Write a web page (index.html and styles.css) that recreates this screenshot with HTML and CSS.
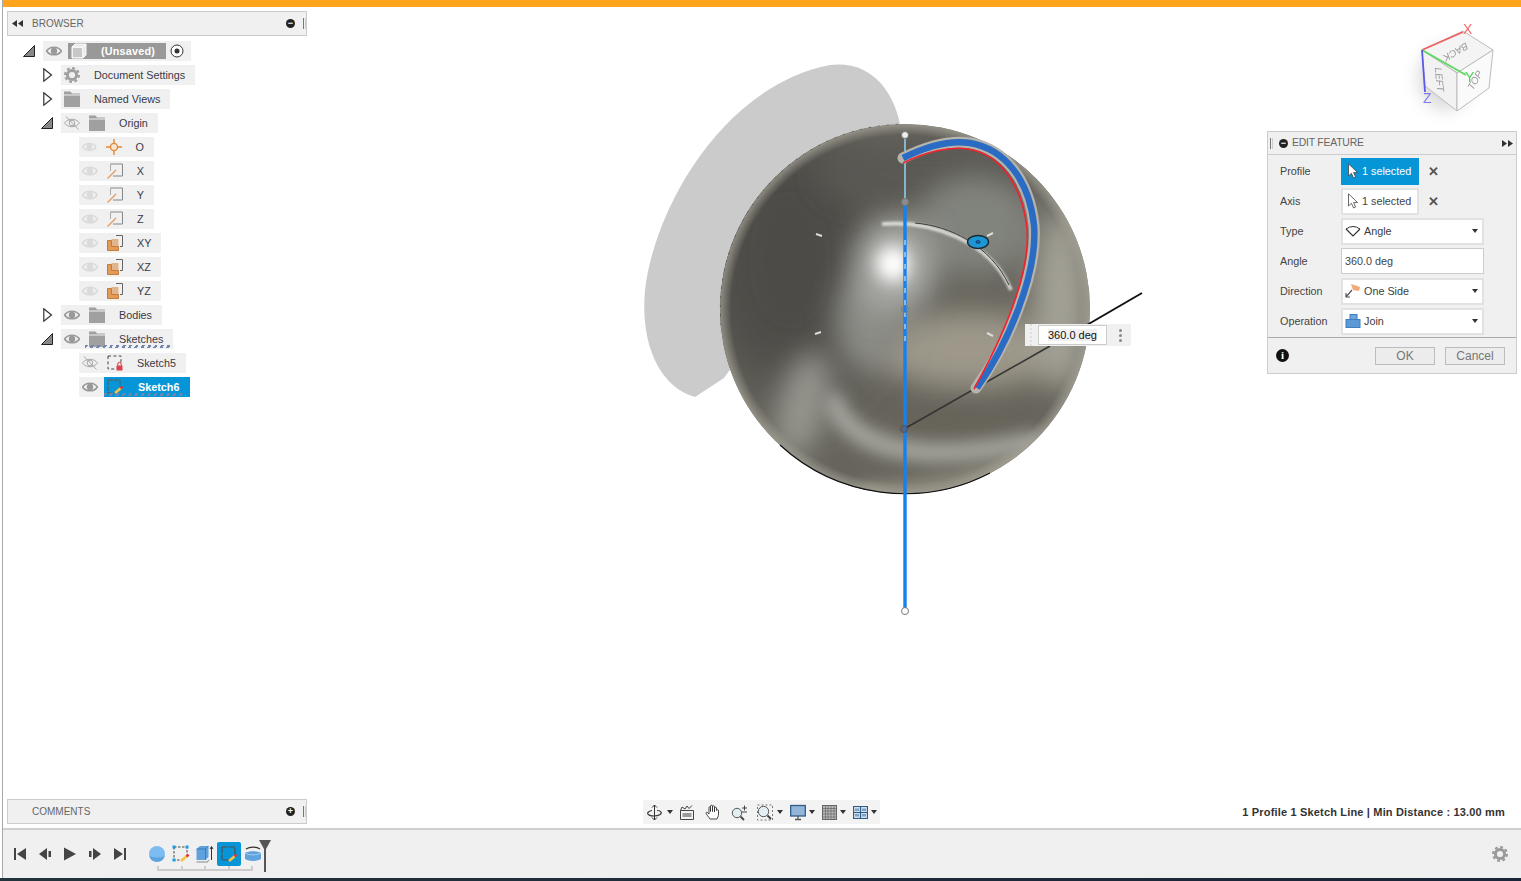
FILE: index.html
```html
<!DOCTYPE html>
<html lang="en">
<head>
    <meta charset="UTF-8">
    <meta name="viewport" content="width=device-width, initial-scale=1.0">
    <title>Edit Feature</title>
    <link rel="stylesheet" href="styles.css">
</head>
<body>
    <!-- shared icons -->
    <svg class="defs" width="0" height="0">
        <defs>
            <symbol id="eye" viewBox="0 0 16 16">
                <path d="M0.5 8C4 3 12 3 15.5 8C12 13 4 13 0.5 8Z" fill="none" stroke="currentColor" stroke-width="1.6"/>
                <circle cx="8" cy="8" r="3.2" fill="currentColor"/>
            </symbol>
            <symbol id="eye-off" viewBox="0 0 16 16">
                <path d="M0.5 8C4 3 12 3 15.5 8C12 13 4 13 0.5 8Z" fill="none" stroke="currentColor" stroke-width="1"/>
                <circle cx="8" cy="8" r="2.8" fill="none" stroke="currentColor"/>
                <path d="M2 1.5L14.5 14.5" stroke="currentColor"/>
            </symbol>
            <symbol id="folder" viewBox="0 0 16 16">
                <path d="M0 0.5H6.5L8 2.5H16V3.5H0Z M0 4.5H16V16H0Z" fill="#a0a0a0"/>
            </symbol>
            <symbol id="gear" viewBox="0 0 16 16">
                <circle cx="8" cy="8" r="4.6" fill="none" stroke="currentColor" stroke-width="3"/>
                <circle cx="8" cy="8" r="6.9" fill="none" stroke="currentColor" stroke-width="2.2" stroke-dasharray="2.9 2.5"/>
            </symbol>
            <symbol id="tri-open" viewBox="0 0 12 12">
                <path d="M11.5 0.5V11.5H0.5Z" fill="#888" stroke="#222"/>
            </symbol>
            <symbol id="tri-closed" viewBox="0 0 10 14">
                <path d="M0.8 0.8L8.5 7L0.8 13.2Z" fill="#fff" stroke="#333" stroke-width="1.2"/>
            </symbol>
            <symbol id="axis" viewBox="0 0 16 16">
                <path d="M3.5 1H15.5V13H6" fill="none" stroke="#888"/>
                <path d="M3.5 1V8" stroke="#aaa"/>
                <path d="M0.5 15.5L9 7" stroke="#e49a5c" stroke-width="1.2"/>
            </symbol>
            <symbol id="plane" viewBox="0 0 16 16">
                <path d="M9 0.5H15.5V11.5H13" fill="none" stroke="#666"/>
                <rect x="4.5" y="4" width="7" height="7" fill="#e2b48a"/>
                <path d="M0.5 5.5H4.5V11.5H11.5V15.5H0.5Z" fill="#e09a5a" stroke="#c97a35"/>
            </symbol>
            <symbol id="pointer" viewBox="0 0 12 16">
                <path d="M1.5 0.8V13L4.4 10.3L6.6 15L8.6 14L6.6 9.6H10.6Z" fill="currentColor" stroke="#444" stroke-width="0.8"/>
            </symbol>
            <symbol id="caret" viewBox="0 0 6 4">
                <path d="M0 0H6L3 4Z" fill="#333"/>
            </symbol>
            <symbol id="double-left" viewBox="0 0 11 7">
                <path d="M0 3.5L5 0V7Z M6 3.5L11 0V7Z" fill="#333"/>
            </symbol>
            <symbol id="double-right" viewBox="0 0 11 7">
                <path d="M5 3.5L0 0V7Z M11 3.5L6 0V7Z" fill="#333"/>
            </symbol>
        </defs>
    </svg>

    <div class="app">
        <div class="topbar"></div>

        <div class="workspace">
            <!-- model area, drawn in page coordinates -->
            <svg class="scene" viewBox="3 7 1518 821" width="1518" height="821">
                <defs>
                    <clipPath id="ballClip"><circle cx="905" cy="309" r="185"/></clipPath>
                    <filter id="b30" x="-60%" y="-60%" width="220%" height="220%"><feGaussianBlur stdDeviation="30"/></filter>
                    <filter id="b14" x="-60%" y="-60%" width="220%" height="220%"><feGaussianBlur stdDeviation="14"/></filter>
                    <filter id="b8" x="-60%" y="-60%" width="220%" height="220%"><feGaussianBlur stdDeviation="8"/></filter>
                    <filter id="b1" x="-30%" y="-30%" width="160%" height="160%"><feGaussianBlur stdDeviation="0.7"/></filter>
                    <filter id="b2" x="-30%" y="-30%" width="160%" height="160%"><feGaussianBlur stdDeviation="1.2"/></filter>
                    <radialGradient id="rim" cx="905" cy="309" r="185" gradientUnits="userSpaceOnUse">
                        <stop offset="0.94" stop-color="#a8a69a" stop-opacity="0"/>
                        <stop offset="1" stop-color="#a8a69a" stop-opacity="0.7"/>
                    </radialGradient>
                </defs>

                <path class="shadow" d="M724 378L695 397C660 387 640 345 645 290C655 205 725 85 830 65C870 60 895 90 901 130Z"/>

                <g clip-path="url(#ballClip)">
                    <rect x="715" y="120" width="380" height="380" fill="#66645c"/>
                    <ellipse cx="790" cy="260" rx="95" ry="130" fill="#4d4c47" filter="url(#b30)"/>
                    <ellipse cx="930" cy="175" rx="110" ry="35" fill="#5a5953" filter="url(#b14)"/>
                    <ellipse cx="975" cy="225" rx="60" ry="50" fill="#81837d" filter="url(#b14)"/>
                    <ellipse cx="970" cy="350" rx="95" ry="38" fill="#9d988a" filter="url(#b14)"/>
                    <ellipse cx="1060" cy="300" rx="28" ry="90" fill="#a3a196" filter="url(#b14)"/>
                    <ellipse cx="945" cy="425" rx="75" ry="14" fill="#67645a" filter="url(#b8)"/>
                    <path d="M830 395C850 455 930 465 1040 440" fill="none" stroke="#a5a59e" stroke-width="20" filter="url(#b8)"/>
                    <path d="M860 490C920 490 990 480 1050 445" fill="none" stroke="#9b9788" stroke-width="12" filter="url(#b8)"/>
                    <ellipse cx="803" cy="405" rx="24" ry="55" fill="#95958e" filter="url(#b14)" transform="rotate(15 803 405)"/>
                    <ellipse cx="870" cy="320" rx="35" ry="50" fill="#8b8c86" filter="url(#b14)"/>
                    <ellipse cx="895" cy="265" rx="42" ry="48" fill="#a9aaa6" filter="url(#b14)"/>
                    <ellipse cx="893" cy="264" rx="17" ry="18" fill="#fff" filter="url(#b8)"/>
                    <circle cx="905" cy="309" r="185" fill="url(#rim)"/>
                </g>
                <path d="M780 445A185 185 0 0 0 990 473" fill="none" stroke="#111" stroke-width="1.2"/>
                <path d="M721 325A185 185 0 0 1 900 124" fill="none" stroke="#222" stroke-width="0.8" stroke-dasharray="2 7" opacity="0.5"/>

                <!-- small highlights on the ball -->
                <path class="tick" d="M816 234L822 236M815 334L821 332M987 333L993 336M987 236L993 233"/>

                <!-- inner arc and handle -->
                <path d="M882 224C930 220 990 240 1011 290" fill="none" stroke="#f2f2f0" stroke-width="4" opacity="0.75" filter="url(#b2)"/>
                <path d="M915 223C950 226 990 245 1009 285" fill="none" stroke="#3d3d3a" stroke-width="1"/>
                <ellipse cx="978" cy="242" rx="10.5" ry="6.5" fill="#1e96d4" stroke="#1c2b33" stroke-width="1.4"/>
                <ellipse cx="978" cy="242" rx="2" ry="1.2" fill="none" stroke="#125"/>

                <!-- revolve axis -->
                <path d="M904 429L1050 346" stroke="#333" stroke-width="1.5"/>
                <path d="M1080 329L1142 293" stroke="#111" stroke-width="2"/>
                <path d="M905 135V203" stroke="#8fcdea" stroke-width="1.6"/>
                <path d="M905 203V611" stroke="#1580f0" stroke-width="3.4"/>
                <path d="M905 240V345" stroke="#cfe0ee" stroke-width="1.2" stroke-dasharray="5 7"/>

                <!-- profile -->
                <path d="M903 158C925 147 950 140 970 143C1005 149 1029 180 1034 225C1038 275 1007 345 976 388" fill="none" stroke="#b5b3ac" stroke-width="11" stroke-linecap="round"/>
                <path d="M903 158C925 147 950 140 970 143C1005 149 1029 180 1034 225C1038 275 1007 345 977 388" fill="none" stroke="#2a6bc4" stroke-width="6.5"/>
                <path d="M903 163C925 152 950 146 968 149C1000 154 1022 185 1027 228C1031 275 1000 342 974 389" fill="none" stroke="#f4212e" stroke-width="1.6"/>

                <circle cx="905" cy="135" r="3.5" fill="#eee" stroke="#777"/>
                <circle cx="905" cy="202" r="3.5" fill="#8a8d8c" stroke="#777"/>
                <circle cx="905" cy="309" r="3.5" fill="none" stroke="#77807f"/>
                <circle cx="904" cy="429" r="3.5" fill="#5b5a70" fill-opacity="0.5" stroke="#555"/>
                <circle cx="905" cy="611" r="3.5" fill="#fff" stroke="#777"/>

                <!-- view cube -->
                <ellipse cx="1445" cy="78" rx="27" ry="32" fill="#ccc" filter="url(#b8)" opacity="0.7"/>
                <g filter="url(#b1)">
                    <path d="M1422 50L1463 31L1493 50L1457 73Z" fill="#f4f4f4" stroke="#bbb"/>
                    <path d="M1422 50L1457 73V111L1425 86Z" fill="#f2f2f2" stroke="#bbb"/>
                    <path d="M1457 73L1493 50L1489 88L1457 111Z" fill="#fafafa" stroke="#bbb"/>
                    <path d="M1422 50L1463 32" stroke="#ef6060" stroke-width="1.8"/>
                    <path d="M1422 50L1466 75" stroke="#5fd65f" stroke-width="1.8"/>
                    <path d="M1422 50L1425 92" stroke="#5a5ae6" stroke-width="1.8"/>
                    <text class="axis-label axis-x" x="1463" y="34">X</text>
                    <text class="axis-label axis-y" x="1465" y="82">Y</text>
                    <text class="axis-label axis-z" x="1423" y="103">Z</text>
                    <text class="cube-label" transform="translate(1454 49) rotate(150)">BACK</text>
                    <text class="cube-label" transform="translate(1436 80) rotate(84)">LEFT</text>
                    <text class="cube-label" transform="translate(1478 82) rotate(-60)">TOP</text>
                </g>
            </svg>

            <!-- browser -->
            <div class="side">
                <div class="panel-head">
                    <svg class="collapse"><use href="#double-left"/></svg>
                    <span class="head-title">BROWSER</span>
                    <span class="round-btn">−</span>
                    <span class="grip"></span>
                </div>
                <div class="tree">
                    <div class="row lvl0">
                        <svg class="tri-open"><use href="#tri-open"/></svg>
                        <div class="pill">
                            <svg class="eye"><use href="#eye"/></svg>
                            <span class="doc-name">
                                <svg class="cube" viewBox="0 0 16 16" width="16" height="16">
                                    <path d="M1 4L4 1H15V12L12 15H1Z" fill="#e6e6e6" stroke="#fff"/>
                                    <path d="M12 15V4H1M12 4L15 1" fill="none" stroke="#fff"/>
                                    <path d="M2 5H11V14H2Z" fill="#c8c8c8"/>
                                </svg>
                                <b>(Unsaved)</b>
                            </span>
                            <svg class="radio" viewBox="0 0 14 14" width="14" height="14">
                                <circle cx="7" cy="7" r="6" fill="#fff" stroke="#333"/>
                                <circle cx="7" cy="7" r="2.5" fill="#333"/>
                            </svg>
                        </div>
                    </div>
                    <div class="row lvl1">
                        <svg class="tri-closed"><use href="#tri-closed"/></svg>
                        <div class="pill">
                            <svg class="icon gear"><use href="#gear"/></svg>
                            <span class="label">Document Settings</span>
                        </div>
                    </div>
                    <div class="row lvl1">
                        <svg class="tri-closed"><use href="#tri-closed"/></svg>
                        <div class="pill">
                            <svg class="icon"><use href="#folder"/></svg>
                            <span class="label">Named Views</span>
                        </div>
                    </div>
                    <div class="row lvl1">
                        <svg class="tri-open"><use href="#tri-open"/></svg>
                        <div class="pill">
                            <svg class="eye off"><use href="#eye-off"/></svg>
                            <svg class="icon"><use href="#folder"/></svg>
                            <span class="label">Origin</span>
                        </div>
                    </div>
                    <div class="row lvl2">
                        <div class="pill wide">
                            <svg class="eye faint"><use href="#eye"/></svg>
                            <svg class="icon" viewBox="0 0 16 16">
                                <path d="M8 0V16M0 8H16" stroke="#e0883c" stroke-width="1.4"/>
                                <circle cx="8" cy="8" r="3.6" fill="#fbe3cc" stroke="#e0883c" stroke-width="1.4"/>
                            </svg>
                            <span class="label">O</span>
                        </div>
                    </div>
                    <div class="row lvl2">
                        <div class="pill wide">
                            <svg class="eye faint"><use href="#eye"/></svg>
                            <svg class="icon"><use href="#axis"/></svg>
                            <span class="label">X</span>
                        </div>
                    </div>
                    <div class="row lvl2">
                        <div class="pill wide">
                            <svg class="eye faint"><use href="#eye"/></svg>
                            <svg class="icon"><use href="#axis"/></svg>
                            <span class="label">Y</span>
                        </div>
                    </div>
                    <div class="row lvl2">
                        <div class="pill wide">
                            <svg class="eye faint"><use href="#eye"/></svg>
                            <svg class="icon"><use href="#axis"/></svg>
                            <span class="label">Z</span>
                        </div>
                    </div>
                    <div class="row lvl2">
                        <div class="pill">
                            <svg class="eye faint"><use href="#eye"/></svg>
                            <svg class="icon"><use href="#plane"/></svg>
                            <span class="label">XY</span>
                        </div>
                    </div>
                    <div class="row lvl2">
                        <div class="pill">
                            <svg class="eye faint"><use href="#eye"/></svg>
                            <svg class="icon"><use href="#plane"/></svg>
                            <span class="label">XZ</span>
                        </div>
                    </div>
                    <div class="row lvl2">
                        <div class="pill">
                            <svg class="eye faint"><use href="#eye"/></svg>
                            <svg class="icon"><use href="#plane"/></svg>
                            <span class="label">YZ</span>
                        </div>
                    </div>
                    <div class="row lvl1">
                        <svg class="tri-closed"><use href="#tri-closed"/></svg>
                        <div class="pill">
                            <svg class="eye"><use href="#eye"/></svg>
                            <svg class="icon"><use href="#folder"/></svg>
                            <span class="label">Bodies</span>
                        </div>
                    </div>
                    <div class="row lvl1">
                        <svg class="tri-open"><use href="#tri-open"/></svg>
                        <div class="pill">
                            <svg class="eye"><use href="#eye"/></svg>
                            <svg class="icon"><use href="#folder"/></svg>
                            <span class="label">Sketches</span>
                            <span class="hatch hatch-sketches"></span>
                        </div>
                    </div>
                    <div class="row lvl2">
                        <div class="pill">
                            <svg class="eye off"><use href="#eye-off"/></svg>
                            <svg class="icon" viewBox="0 0 16 16">
                                <path d="M1 1H14V8M1 1V14H8" fill="none" stroke="#444" stroke-dasharray="3 2.4"/>
                                <rect x="9.5" y="10.5" width="6" height="5" fill="#d9434e"/>
                                <path d="M10.8 10.5V9A1.7 1.7 0 0 1 14.2 9V10.5" fill="none" stroke="#c33"/>
                            </svg>
                            <span class="label">Sketch5</span>
                        </div>
                    </div>
                    <div class="row lvl2">
                        <div class="pill selected-pill">
                            <svg class="eye"><use href="#eye"/></svg>
                            <span class="sel-name">
                                <svg class="icon" viewBox="0 0 16 16">
                                    <path d="M1 1H13V8M1 1V14H8" fill="none" stroke="#5a5a5a" stroke-dasharray="5 1"/>
                                    <path d="M8 14L14 9" stroke="#f5c542" stroke-width="2.6"/>
                                    <path d="M13.5 9.5L15.5 7.5" stroke="#e0343f" stroke-width="2.6"/>
                                </svg>
                                <b>Sketch6</b>
                                <span class="hatch hatch-sel"></span>
                            </span>
                        </div>
                    </div>
                </div>
            </div>

            <!-- comments -->
            <div class="panel-head comments">
                <span class="collapse"></span>
                <span class="head-title">COMMENTS</span>
                <span class="round-btn">+</span>
                <span class="grip"></span>
            </div>

            <!-- value box next to the model -->
            <div class="dim-box">
                <span class="dim-grip"></span>
                <span class="dim-value"><span>360.0 deg</span></span>
                <span class="dim-menu"><i></i><i></i><i></i></span>
            </div>

            <!-- edit feature dialog -->
            <div class="dialog">
                <div class="dialog-head">
                    <span class="grip"></span>
                    <span class="round-btn">−</span>
                    <span class="head-title">EDIT FEATURE</span>
                    <svg class="collapse"><use href="#double-right"/></svg>
                </div>
                <div class="dialog-body">
                    <label>Profile</label>
                    <div class="field-line">
                        <div class="pick active">
                            <svg class="pointer"><use href="#pointer"/></svg>1 selected
                        </div>
                        <span class="clear">✕</span>
                    </div>
                    <label>Axis</label>
                    <div class="field-line">
                        <div class="pick">
                            <svg class="pointer"><use href="#pointer"/></svg>1 selected
                        </div>
                        <span class="clear">✕</span>
                    </div>
                    <label>Type</label>
                    <div class="select">
                        <svg class="opt-icon" viewBox="0 0 16 16">
                            <path d="M1 6L8 13L15 6" fill="none" stroke="#333" stroke-width="1.2"/>
                            <path d="M1 6Q8 1 15 6" fill="none" stroke="#333"/>
                        </svg>
                        <span>Angle</span>
                        <svg class="caret"><use href="#caret"/></svg>
                    </div>
                    <label>Angle</label>
                    <div class="text-input">360.0 deg</div>
                    <label>Direction</label>
                    <div class="select">
                        <svg class="opt-icon" viewBox="0 0 16 16">
                            <path d="M6 1L15 4L14 8L8 7Z" fill="#f2a877"/>
                            <path d="M7 7L1 14M1 10V14H5" fill="none" stroke="#555" stroke-width="1.2"/>
                        </svg>
                        <span>One Side</span>
                        <svg class="caret"><use href="#caret"/></svg>
                    </div>
                    <label>Operation</label>
                    <div class="select">
                        <svg class="opt-icon" viewBox="0 0 16 16">
                            <rect x="5" y="1.5" width="7" height="7" fill="#6fa5d8" stroke="#3f7fbd"/>
                            <rect x="1" y="6.5" width="14" height="8" fill="#5c9ad6" stroke="#3f7fbd"/>
                        </svg>
                        <span>Join</span>
                        <svg class="caret"><use href="#caret"/></svg>
                    </div>
                </div>
                <div class="dialog-foot">
                    <span class="info">i</span>
                    <button class="btn">OK</button>
                    <button class="btn">Cancel</button>
                </div>
            </div>

            <!-- navigation toolbar -->
            <div class="navbar">
                <div class="tool">
                    <svg width="17" height="17" viewBox="0 0 17 17">
                        <path d="M8.5 1V16M6 3.5L8.5 1L11 3.5M6 13.5L8.5 16L11 13.5" fill="none" stroke="#333"/>
                        <path d="M6 6.5C-1 8 1 12 8 12C13 12 16 10 15 8C14.5 7 13 6.5 11 6.5" fill="none" stroke="#333" stroke-width="1.2"/>
                    </svg>
                    <svg class="caret"><use href="#caret"/></svg>
                </div>
                <div class="tool solo">
                    <svg width="16" height="17" viewBox="0 0 16 17">
                        <path d="M1.5 6.5H14.5V15.5H1.5Z" fill="#f4f4f4" stroke="#444"/>
                        <rect x="3.5" y="9" width="9" height="4" fill="#9a9a9a"/>
                        <path d="M1.5 6.5L3 3L6 5L8 2L10 4.5L13 1.5" fill="none" stroke="#444"/>
                    </svg>
                </div>
                <div class="tool solo">
                    <svg width="16" height="17" viewBox="0 0 16 17">
                        <path d="M5 15C3 12 1 10 1 9C1 8 2.5 8 4 10V3.5C4 2.5 5.5 2.5 5.5 3.5V7.5V2C5.5 1 7.5 1 7.5 2V7.5V2.5C7.5 1.5 9.5 1.5 9.5 2.5V8V4C9.5 3 11.5 3 11.5 4V6.5C12 5.5 13.5 5.5 13.5 6.5V10C13.5 12 12.5 14 12 15Z" fill="#fff" stroke="#333" stroke-width="0.9"/>
                    </svg>
                </div>
                <div class="tool solo">
                    <svg width="16" height="17" viewBox="0 0 16 17">
                        <circle cx="6" cy="9" r="4.7" fill="#e3eef3" stroke="#555"/>
                        <path d="M9.5 12.5L13 16" stroke="#444" stroke-width="1.8"/>
                        <path d="M11 4H16M13.5 1.5V6.5M11 8H16" fill="none" stroke="#444"/>
                    </svg>
                </div>
                <div class="tool">
                    <svg width="16" height="17" viewBox="0 0 16 17">
                        <rect x="0.5" y="1" width="15" height="15" fill="none" stroke="#777" stroke-dasharray="2 2"/>
                        <circle cx="6.5" cy="7.5" r="5.2" fill="#e3eef3" stroke="#555"/>
                        <path d="M10.5 11.5L14 15" stroke="#444" stroke-width="2"/>
                    </svg>
                    <svg class="caret"><use href="#caret"/></svg>
                </div>
                <div class="tool tight">
                    <svg width="16" height="17" viewBox="0 0 16 17">
                        <rect x="0.7" y="1.5" width="14.6" height="10.5" fill="#93b6d8" stroke="#2f5d87" stroke-width="1.3"/>
                        <path d="M5 15.5H11M8 12V15.5" stroke="#555" stroke-width="1.3"/>
                    </svg>
                    <svg class="caret"><use href="#caret"/></svg>
                </div>
                <div class="tool tight">
                    <svg width="15" height="17" viewBox="0 0 15 17">
                        <rect x="0.5" y="1.5" width="14" height="14" fill="#bbb" stroke="#666"/>
                        <path d="M3.5 1.5V15.5M6 1.5V15.5M9 1.5V15.5M12 1.5V15.5M0.5 4.5H14.5M0.5 7H14.5M0.5 10H14.5M0.5 13H14.5" stroke="#666" stroke-width="0.7"/>
                    </svg>
                    <svg class="caret"><use href="#caret"/></svg>
                </div>
                <div class="tool tight">
                    <svg width="15" height="17" viewBox="0 0 15 17">
                        <path d="M0.5 2.5H14.5V14.5H0.5Z M7.5 2.5V14.5M0.5 8.5H14.5" fill="#d3e1ee" stroke="#2f5d87" stroke-width="1.2"/>
                        <rect x="2" y="4.5" width="4" height="2.5" fill="#7da3c7"/>
                        <rect x="9" y="4.5" width="4" height="2.5" fill="#7da3c7"/>
                        <rect x="2" y="10" width="4" height="2.5" fill="#7da3c7"/>
                        <rect x="9" y="10" width="4" height="2.5" fill="#7da3c7"/>
                    </svg>
                    <svg class="caret"><use href="#caret"/></svg>
                </div>
            </div>

            <div class="status">1 Profile 1 Sketch Line | Min Distance : 13.00 mm</div>
        </div>

        <!-- timeline -->
        <div class="timeline">
            <div class="player">
                <svg viewBox="0 0 14 14"><path d="M1 1H3V13H1ZM13 1V13L4 7Z" fill="#444"/></svg>
                <svg viewBox="0 0 14 14"><path d="M9 1V13L1 7ZM10.5 4H13V10H10.5Z" fill="#444"/></svg>
                <svg viewBox="0 0 14 14"><path d="M1 0.5V13.5L13 7Z" fill="#444"/></svg>
                <svg viewBox="0 0 14 14"><path d="M5 1V13L13 7ZM1 4H3.5V10H1Z" fill="#444"/></svg>
                <svg viewBox="0 0 14 14"><path d="M1 1V13L10 7ZM11 1H13V13H11Z" fill="#444"/></svg>
            </div>
            <div class="features">
                <div class="feature">
                    <svg viewBox="0 0 18 18" width="18" height="18">
                        <circle cx="9" cy="9" r="8" fill="#7dbcf2"/>
                        <path d="M1.2 10.5C4 13 14 13 16.8 10.5A8 8 0 0 1 1.2 10.5Z" fill="#5fa2dd"/>
                    </svg>
                </div>
                <div class="feature">
                    <svg viewBox="0 0 18 18" width="18" height="18">
                        <path d="M2 2H15V9M2 2V15H9" fill="none" stroke="#444" stroke-dasharray="2.5 1.5"/>
                        <rect x="0.5" y="0.5" width="3" height="3" fill="#1f9ce0"/>
                        <rect x="13.5" y="0.5" width="3" height="3" fill="#1f9ce0"/>
                        <rect x="0.5" y="13.5" width="3" height="3" fill="#1f9ce0"/>
                        <path d="M9 16L15 11" stroke="#f5c542" stroke-width="2.6"/>
                        <path d="M14.5 11.5L16.5 9.5" stroke="#e0343f" stroke-width="2.6"/>
                    </svg>
                </div>
                <div class="feature">
                    <svg viewBox="0 0 18 18" width="18" height="18">
                        <path d="M0.5 4L4 1H12.5V12L9.5 15H0.5Z" fill="#5fa2dd"/>
                        <path d="M9.5 15V4H0.5M9.5 4L12.5 1" fill="none" stroke="#2f6ea8" stroke-width="0.7"/>
                        <path d="M0.5 17H11L13 15" fill="none" stroke="#aaa" stroke-width="1.4"/>
                        <path d="M15.5 15V2M14 4L15.5 1.5L17 4" fill="none" stroke="#333"/>
                    </svg>
                </div>
                <div class="feature active">
                    <svg viewBox="0 0 18 18" width="18" height="18">
                        <path d="M2 2H15V9M2 2V15H9" fill="none" stroke="#5a4a44" stroke-width="1.2" stroke-dasharray="6 1"/>
                        <path d="M9 16L15 11" stroke="#f5c542" stroke-width="2.6"/>
                        <path d="M14.5 11.5L16.5 9.5" stroke="#e0343f" stroke-width="2.6"/>
                    </svg>
                </div>
                <div class="feature">
                    <svg viewBox="0 0 18 18" width="18" height="18">
                        <path d="M1 8C5 5.5 13 5.5 17 8V14C13 16.5 5 16.5 1 14Z" fill="#5fa2dd"/>
                        <path d="M1 8C5 10.5 13 10.5 17 8" fill="none" stroke="#a8d0ef"/>
                        <path d="M2 4C6 1.5 12 1.5 16 4" fill="none" stroke="#333" stroke-width="1.2"/>
                    </svg>
                </div>
                <div class="bracket"><i></i><i></i><i></i><i></i><i></i></div>
                <svg class="marker" viewBox="0 0 12 32" width="12" height="32">
                    <path d="M0 0H12L7 9V32H5V9Z" fill="#555"/>
                </svg>
            </div>
            <svg class="tl-gear"><use href="#gear"/></svg>
        </div>
    </div>
    <div class="strip"></div>
</body>
</html>
```

FILE: styles.css
```css
* {
    box-sizing: border-box;
}

html, body {
    height: 100%;
    margin: 0;
}

body {
    font-family: "Liberation Sans", Arial, sans-serif;
    font-size: 11px;
    color: #3c3c3c;
    background-color: white;
    display: flex;
    flex-direction: column;
    overflow: hidden;
}

.defs {
    position: absolute;
}

.app {
    flex: 1;
    min-height: 0;
    margin-left: 2px;
    border-left: 1px solid #a8a8a8;
    display: flex;
    flex-direction: column;
}

.topbar {
    height: 7px;
    background-color: #ffa41c;
}

.workspace {
    flex: 1;
    min-height: 0;
    position: relative;
}

.scene {
    position: absolute;
    left: 0;
    top: 0;
}

.shadow {
    fill: #cbcbcb;
}

.tick {
    stroke: #dcdcd8;
    stroke-width: 2;
    fill: none;
}

.axis-label {
    font-size: 14px;
}

.axis-x { fill: #ef6a6a; }
.axis-y { fill: #4fd04f; }
.axis-z { fill: #7d7df0; }

.cube-label {
    font-size: 10px;
    font-style: italic;
    fill: #999;
    text-anchor: middle;
}

/* browser */
.side {
    position: absolute;
    left: 4px;
    top: 4px;
    width: 300px;
}

.panel-head {
    height: 25px;
    width: 300px;
    background-color: #f0f0f0;
    border: 1px solid #cccccc;
    display: flex;
    align-items: center;
    padding-left: 4px;
}

.collapse {
    width: 11px;
    height: 7px;
    margin-right: 9px;
    flex-shrink: 0;
}

.head-title {
    flex: 1;
    color: #666;
    font-size: 10px;
    margin-top: -1px;
}

.round-btn {
    width: 9px;
    height: 9px;
    border-radius: 50%;
    background-color: #222;
    color: white;
    font-size: 9px;
    font-weight: bold;
    line-height: 9px;
    text-align: center;
    flex-shrink: 0;
}

.grip {
    width: 3px;
    height: 11px;
    border-left: 1px solid #777;
    border-right: 1px solid #ccc;
    margin: 0 0 0 8px;
}

.comments {
    position: absolute;
    left: 4px;
    top: 792px;
}

.tree {
    padding-top: 5px;
    display: flex;
    flex-direction: column;
    gap: 4px;
}

.row {
    height: 20px;
    display: flex;
    align-items: center;
}

.lvl0 { padding-left: 18px; }
.lvl1 { padding-left: 36px; }
.lvl2 { padding-left: 72px; }

.tri-open {
    width: 12px;
    height: 12px;
    margin-left: -2px;
    margin-right: 8px;
}

.tri-closed {
    width: 10px;
    height: 14px;
    margin-right: 8px;
}

.pill {
    height: 20px;
    background-color: #f0f0f0;
    display: flex;
    align-items: center;
    padding: 0 10px 0 3px;
    position: relative;
    font-size: 10.8px;
    color: #3a3a48;
}

.pill.wide {
    width: 75px;
}

.eye {
    width: 16px;
    height: 16px;
    color: #999999;
    margin-right: 9px;
}

.eye.off {
    color: #a8a8a8;
}

.eye.faint {
    color: #dadada;
}

.icon {
    width: 16px;
    height: 16px;
    flex-shrink: 0;
}

.gear {
    color: #a0a0a0;
}

.icon + .label {
    margin-left: 14px;
}

.doc-name {
    margin-left: -3px;
    width: 98px;
    height: 16px;
    background-color: #999999;
    display: flex;
    align-items: center;
    padding-left: 3px;
    color: white;
}

.doc-name b {
    margin-left: 14px;
    letter-spacing: 0.2px;
}

.cube {
    flex-shrink: 0;
}

.radio {
    margin-left: 4px;
    margin-right: -3px;
}

.selected-pill {
    padding-right: 0;
}

.selected-pill .eye {
    margin-right: 6px;
}

.sel-name {
    height: 20px;
    width: 86px;
    background-color: #0696d7;
    color: white;
    display: flex;
    align-items: center;
    padding-left: 3px;
    position: relative;
}

.sel-name b {
    margin-left: 15px;
}

.hatch {
    position: absolute;
    bottom: 1px;
    height: 3px;
    background-image: repeating-linear-gradient(120deg, #7485ad 0, #7485ad 2.5px, transparent 2.5px, transparent 5.5px);
}

.hatch-sketches {
    left: 24px;
    right: 2px;
}

.hatch-sel {
    left: 0;
    right: 4px;
}

/* value box */
.dim-box {
    position: absolute;
    left: 1022px;
    top: 317px;
    width: 106px;
    height: 22px;
    background-color: #f0f0f0;
    display: flex;
    align-items: center;
}

.dim-grip {
    width: 13px;
    height: 22px;
    border-left: 2px dotted #ddd;
    margin-left: 5px;
    flex-shrink: 0;
    margin-right: -5px;
}

.dim-value {
    width: 69px;
    height: 20px;
    background-color: white;
    border: 1px solid #cccccc;
    padding-left: 9px;
    font-size: 11px;
    line-height: 18px;
    color: #111;
}

.dim-value span {
    background-color: #f0f0f0;
}

.dim-menu {
    display: flex;
    flex-direction: column;
    gap: 2px;
    margin-left: 12px;
}

.dim-menu i {
    width: 3px;
    height: 3px;
    border-radius: 50%;
    background-color: #888;
}

/* dialog */
.dialog {
    position: absolute;
    left: 1264px;
    top: 124px;
    width: 250px;
    height: 243px;
    background-color: #f0f0f0;
    border: 1px solid #cccccc;
    display: flex;
    flex-direction: column;
}

.dialog-head {
    height: 23px;
    display: flex;
    align-items: center;
    border-bottom: 1px solid #cccccc;
    padding: 0 0 0 2px;
}

.dialog-head .grip {
    margin: 0 6px 0 0;
}

.dialog-head .head-title {
    margin-left: 4px;
    font-size: 10.4px;
    letter-spacing: -0.2px;
    margin-top: -1px;
}

.dialog-head .collapse {
    margin-right: 3px;
}

.dialog-body {
    flex: 1;
    display: grid;
    grid-template-columns: 49px 143px;
    grid-auto-rows: 30px;
    column-gap: 12px;
    align-items: center;
    padding: 0 0 0 12px;
    margin-top: 1px;
    font-size: 10.8px;
}

.dialog-body label {
    color: #444;
}

.field-line {
    display: flex;
    align-items: center;
}

.pick {
    width: 78px;
    height: 27px;
    background-color: white;
    border: 2px solid #e2e2e2;
    display: flex;
    align-items: center;
    padding-left: 4px;
    color: #444;
}

.pick.active {
    background-color: #0696d7;
    border-color: #0696d7;
    color: white;
}

.pointer {
    width: 12px;
    height: 16px;
    color: white;
    margin-right: 3px;
    flex-shrink: 0;
}

.clear {
    margin-left: 9px;
    color: #555;
    font-size: 13px;
    font-weight: bold;
}

.select {
    height: 27px;
    background-color: white;
    border: 2px solid #e2e2e2;
    display: flex;
    align-items: center;
    padding: 0 4px 0 2px;
}

.select > span {
    flex: 1;
    margin-left: 3px;
}

.opt-icon {
    width: 16px;
    height: 16px;
    flex-shrink: 0;
}

.caret {
    width: 6px;
    height: 4px;
    flex-shrink: 0;
}

.text-input {
    height: 26px;
    background-color: white;
    border: 1px solid #cccccc;
    padding-left: 3px;
    line-height: 24px;
    color: #444;
}

.dialog-foot {
    height: 36px;
    border-top: 1px solid #aaaaaa;
    display: flex;
    align-items: center;
    padding: 0 11px 0 8px;
    gap: 10px;
}

.info {
    width: 13px;
    height: 13px;
    border-radius: 50%;
    background-color: #111;
    color: white;
    font-family: "Liberation Serif", serif;
    font-weight: bold;
    font-size: 11px;
    line-height: 13px;
    text-align: center;
    margin-right: auto;
}

.btn {
    width: 60px;
    height: 18px;
    padding: 0;
    background-color: #ececec;
    border: 1px solid #bdbdbd;
    font-family: inherit;
    font-size: 12px;
    color: #777;
}

/* navigation toolbar */
.navbar {
    position: absolute;
    left: 640px;
    top: 793px;
    width: 237px;
    height: 24px;
    background-color: #f3f3f3;
    display: flex;
    align-items: center;
    gap: 6px;
    padding-left: 3px;
}

.tool {
    display: flex;
    align-items: center;
    gap: 4px;
}

.tool.solo {
    margin-right: 4px;
}

.tool.tight {
    gap: 3px;
    margin-left: 1px;
}

.status {
    position: absolute;
    right: 16px;
    top: 799px;
    font-weight: bold;
    font-size: 11px;
    letter-spacing: 0.17px;
    color: #333;
}

/* timeline */
.timeline {
    height: 50px;
    background-color: #f0f0f0;
    border-top: 2px solid #cfcfcf;
    display: flex;
    align-items: center;
    padding-left: 4px;
    padding-right: 13px;
    flex-shrink: 0;
}

.player {
    display: flex;
    width: 125px;
}

.player svg {
    width: 14px;
    height: 14px;
    margin: 0 5.5px;
}

.features {
    display: flex;
    margin-left: 13px;
    position: relative;
}

.feature {
    width: 24px;
    height: 24px;
    display: flex;
    align-items: center;
    justify-content: center;
    border-radius: 2px;
}

.feature.active {
    background-color: #0696d7;
}

.bracket {
    position: absolute;
    left: 12px;
    top: 24px;
    width: 96px;
    height: 5px;
    border-left: 2px solid #cccccc;
    border-right: 2px solid #cccccc;
    border-bottom: 2px solid #cccccc;
    display: flex;
    justify-content: space-evenly;
}

.bracket i {
    width: 2px;
    height: 3px;
    background-color: #cccccc;
}

.bracket i:first-child,
.bracket i:last-child {
    display: none;
}

.marker {
    position: absolute;
    left: 114px;
    top: -2px;
}

.tl-gear {
    width: 16px;
    height: 16px;
    margin-left: auto;
    color: #9a9a9a;
}

.strip {
    height: 3px;
    background: linear-gradient(90deg, #22333b, #1a2438);
    flex-shrink: 0;
}
```
